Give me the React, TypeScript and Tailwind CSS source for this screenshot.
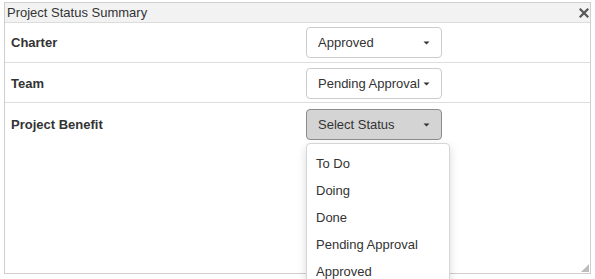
import React from 'react';

const rows = [
  { label: 'Charter', value: 'Approved', active: false },
  { label: 'Team', value: 'Pending Approval', active: false },
  { label: 'Project Benefit', value: 'Select Status', active: true },
];

const options = ['To Do', 'Doing', 'Done', 'Pending Approval', 'Approved'];

function Caret() {
  return (
    <svg width="7" height="4" viewBox="0 0 7 4" className="shrink-0">
      <path d="M0.5 0.5 L6.5 0.5 L3.5 3.5 Z" fill="#333" />
    </svg>
  );
}

export default function App() {
  return (
    <div className="w-[595px] h-[279px] overflow-hidden bg-white pt-[2px] pl-[4px]" style={{ fontFamily: '"Liberation Sans", Arial, sans-serif' }}>
      <div className="relative w-[587px] h-[272px] border border-[#cfcfcf] flex flex-col">
        <div className="h-[20px] bg-[#f2f2f2] border-b border-[#dcdcdc] flex items-center justify-between pl-[2px] pr-[1px]">
          <span className="text-[13px] text-[#333] leading-none">Project Status Summary</span>
          <svg width="10" height="10" viewBox="0 0 10 10">
            <path d="M1.5 1.5 L8.5 8.5 M8.5 1.5 L1.5 8.5" stroke="#555" strokeWidth="2.2" strokeLinecap="square" />
          </svg>
        </div>
        {rows.map((r, i) => (
          <div
            key={r.label}
            className={`flex items-start pl-[6px] ${i < 2 ? 'h-[40px] border-b border-[#dedede]' : ''} ${i === 0 ? 'pt-[4px]' : i === 1 ? 'pt-[5px]' : 'pt-[6px]'}`}
          >
            <div className="w-[295px] h-[31px] flex items-center text-[13px] font-bold text-[#333]">{r.label}</div>
            <div
              className={`w-[136px] h-[31px] rounded-[4px] border flex items-center justify-between pl-[11px] pr-[11px] text-[13px] text-[#333] ${
                r.active ? 'bg-[#d4d4d4] border-[#8c8c8c]' : 'bg-white border-[#cccccc]'
              }`}
            >
              <span className="whitespace-nowrap">{r.value}</span>
              <Caret />
            </div>
          </div>
        ))}
        <div className="absolute left-[301px] top-[140px] w-[144px] h-[160px] bg-white border border-[#d6d6d6] rounded-[4px] shadow-[0_4px_10px_rgba(0,0,0,0.15)] pt-[6px]">
          {options.map((o) => (
            <div key={o} className="h-[27px] flex items-center px-[9px] text-[13px] text-[#333] whitespace-nowrap">
              {o}
            </div>
          ))}
        </div>
        <svg className="absolute right-[1px] bottom-[1px]" width="8" height="8" viewBox="0 0 8 8">
          <path d="M8 0 L8 8 L0 8 Z" fill="#bdbdbd" />
        </svg>
      </div>
    </div>
  );
}
